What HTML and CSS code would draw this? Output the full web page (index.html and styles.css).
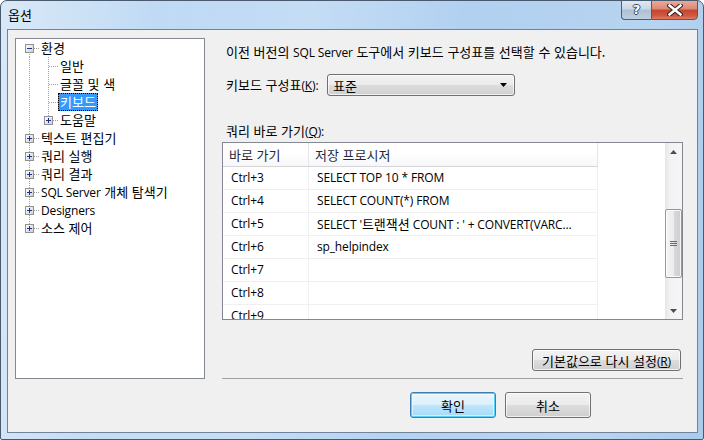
FILE: index.html
```html
<!DOCTYPE html>
<html lang="ko">
<head>
<meta charset="utf-8">
<title>옵션</title>
<link rel="stylesheet" href="styles.css">
</head>
<body>
<div class="window">
  <div class="titlebar">
    <span class="title">옵션</span>
    <div class="caption-btns">
      <div class="cbtn help"><span class="qmark">?</span></div>
      <div class="cbtn close">
        <svg width="16" height="12" viewBox="0 0 16 12"><path d="M2.5 1.5 L13.5 10.5 M13.5 1.5 L2.5 10.5" stroke="#3a2a28" stroke-width="4.6" stroke-linecap="square"/><path d="M2.5 1.5 L13.5 10.5 M13.5 1.5 L2.5 10.5" stroke="#fff" stroke-width="2.4" stroke-linecap="square"/></svg>
      </div>
    </div>
  </div>
  <div class="client">
    <div class="tree">
      <div class="trow">
        <span class="cell root first"><svg class="exp" width="9" height="9" viewBox="0 0 9 9"><defs><linearGradient id="g" x1="0" y1="0" x2="1" y2="1"><stop offset="0" stop-color="#fff"/><stop offset="1" stop-color="#cfcfcf"/></linearGradient></defs><rect x=".5" y=".5" width="8" height="8" fill="url(#g)" stroke="#919191"/><path d="M2 4.5 H7" stroke="#1e3287"/></svg></span>
        <span class="label">환경</span>
      </div>
      <div class="trow">
        <span class="cell root vonly"></span><span class="cell child mid"></span>
        <span class="label">일반</span>
      </div>
      <div class="trow">
        <span class="cell root vonly"></span><span class="cell child mid"></span>
        <span class="label">글꼴 및 색</span>
      </div>
      <div class="trow">
        <span class="cell root vonly"></span><span class="cell child mid"></span>
        <span class="label selected">키보드</span>
      </div>
      <div class="trow">
        <span class="cell root vonly"></span><span class="cell child last"><svg class="exp" width="9" height="9" viewBox="0 0 9 9"><rect x=".5" y=".5" width="8" height="8" fill="url(#g)" stroke="#919191"/><path d="M2 4.5 H7 M4.5 2 V7" stroke="#1e3287"/></svg></span>
        <span class="label">도움말</span>
      </div>
      <div class="trow">
        <span class="cell root mid"><svg class="exp" width="9" height="9" viewBox="0 0 9 9"><rect x=".5" y=".5" width="8" height="8" fill="url(#g)" stroke="#919191"/><path d="M2 4.5 H7 M4.5 2 V7" stroke="#1e3287"/></svg></span>
        <span class="label">텍스트 편집기</span>
      </div>
      <div class="trow">
        <span class="cell root mid"><svg class="exp" width="9" height="9" viewBox="0 0 9 9"><rect x=".5" y=".5" width="8" height="8" fill="url(#g)" stroke="#919191"/><path d="M2 4.5 H7 M4.5 2 V7" stroke="#1e3287"/></svg></span>
        <span class="label">쿼리 실행</span>
      </div>
      <div class="trow">
        <span class="cell root mid"><svg class="exp" width="9" height="9" viewBox="0 0 9 9"><rect x=".5" y=".5" width="8" height="8" fill="url(#g)" stroke="#919191"/><path d="M2 4.5 H7 M4.5 2 V7" stroke="#1e3287"/></svg></span>
        <span class="label">쿼리 결과</span>
      </div>
      <div class="trow">
        <span class="cell root mid"><svg class="exp" width="9" height="9" viewBox="0 0 9 9"><rect x=".5" y=".5" width="8" height="8" fill="url(#g)" stroke="#919191"/><path d="M2 4.5 H7 M4.5 2 V7" stroke="#1e3287"/></svg></span>
        <span class="label"><span class="l">SQL Server</span> 개체 탐색기</span>
      </div>
      <div class="trow">
        <span class="cell root mid"><svg class="exp" width="9" height="9" viewBox="0 0 9 9"><rect x=".5" y=".5" width="8" height="8" fill="url(#g)" stroke="#919191"/><path d="M2 4.5 H7 M4.5 2 V7" stroke="#1e3287"/></svg></span>
        <span class="label"><span class="l">Designers</span></span>
      </div>
      <div class="trow">
        <span class="cell root last"><svg class="exp" width="9" height="9" viewBox="0 0 9 9"><rect x=".5" y=".5" width="8" height="8" fill="url(#g)" stroke="#919191"/><path d="M2 4.5 H7 M4.5 2 V7" stroke="#1e3287"/></svg></span>
        <span class="label">소스 제어</span>
      </div>
    </div>

    <div class="main">
      <p class="desc">이전 버전의 <span class="l">SQL Server</span> 도구에서 키보드 구성표를 선택할 수 있습니다.</p>
      <div class="scheme-row">
        <span class="scheme-label">키보드 구성표<span class="l">(<u>K</u>):</span></span>
        <div class="combo">
          <span class="combo-text">표준</span>
          <svg width="7" height="4" viewBox="0 0 7 4"><path d="M0 0 H7 L3.5 4 Z" fill="#000"/></svg>
        </div>
      </div>
      <div class="qlabel">쿼리 바로 가기<span class="l">(<u>Q</u>):</span></div>
      <div class="listview">
        <div class="lv-body">
          <div class="lv-header">
            <div class="hcell c1">바로 가기</div>
            <div class="hcell c2">저장 프로시저</div>
          </div>
          <div class="lv-row"><div class="cell1">Ctrl+3</div><div class="cell2">SELECT TOP 10 * FROM</div></div>
          <div class="lv-row"><div class="cell1">Ctrl+4</div><div class="cell2">SELECT COUNT(*) FROM</div></div>
          <div class="lv-row"><div class="cell1">Ctrl+5</div><div class="cell2">SELECT '<span class="k">트랜잭션</span> COUNT : ' + CONVERT(VARC...</div></div>
          <div class="lv-row"><div class="cell1">Ctrl+6</div><div class="cell2">sp_helpindex</div></div>
          <div class="lv-row"><div class="cell1">Ctrl+7</div><div class="cell2"></div></div>
          <div class="lv-row"><div class="cell1">Ctrl+8</div><div class="cell2"></div></div>
          <div class="lv-row"><div class="cell1">Ctrl+9</div><div class="cell2"></div></div>
        </div>
        <div class="scrollbar">
          <div class="sb-btn"><svg width="7" height="4" viewBox="0 0 7 4"><path d="M0 4 H7 L3.5 0 Z" fill="#4d4d4d"/></svg></div>
          <div class="sb-gap-top"></div>
          <div class="sb-thumb"><svg width="7" height="6" viewBox="0 0 7 6"><path d="M0 .5 H7 M0 2.5 H7 M0 4.5 H7" stroke="#6b6b6b"/></svg></div>
          <div class="sb-gap"></div>
          <div class="sb-btn"><svg width="7" height="4" viewBox="0 0 7 4"><path d="M0 0 H7 L3.5 4 Z" fill="#4d4d4d"/></svg></div>
        </div>
      </div>
      <div class="reset-row">
        <button class="btn reset">기본값으로 다시 설정<span class="l">(<u>R</u>)</span></button>
      </div>
      <div class="sep"></div>
      <div class="dlg-btns">
        <button class="btn ok">확인</button>
        <button class="btn cancel">취소</button>
      </div>
    </div>
  </div>
</div>
</body>
</html>
```

FILE: styles.css
```css
* { box-sizing: border-box; }
html, body { margin: 0; padding: 0; background: #ffffff; }
body {
  font-family: "Noto Sans CJK KR", sans-serif;
  font-size: 13px;
  color: #000;
}
.l {
  font-family: "Open Sans", "Noto Sans CJK KR", sans-serif;
  font-size: 12px;
  letter-spacing: -0.15px;
}
.k {
  font-family: "Noto Sans CJK KR", sans-serif;
  font-size: 13px;
  letter-spacing: 0;
}
.window {
  width: 704px;
  height: 440px;
  border: 1px solid #4a5a6e;
  border-radius: 7px 7px 2px 2px;
  background:
    linear-gradient(100deg, rgba(255,255,255,0.25) 0%, rgba(255,255,255,0) 20%, rgba(255,255,255,0.18) 40%, rgba(255,255,255,0) 60%, rgba(255,255,255,0.15) 85%, rgba(255,255,255,0) 100%),
    linear-gradient(90deg, #cce1f5 0%, #bcd8f4 30%, #b3d2f1 60%, #a9cbec 100%);
  display: flex;
  flex-direction: column;
  overflow: hidden;
}
.titlebar {
  height: 28px;
  display: flex;
  align-items: flex-start;
  justify-content: space-between;
  flex: none;
}
.title {
  font-size: 13px;
  line-height: 16px;
  margin: 6px 0 0 7px;
  color: #000;
}
.caption-btns {
  display: flex;
  margin: -1px 5px 0 0;
}
.cbtn {
  height: 20px;
  border: 1px solid #4d5d73;
  display: flex;
  align-items: center;
  justify-content: center;
}
.help {
  width: 30px;
  border-right: none;
  border-radius: 0 0 0 4px;
  background: linear-gradient(180deg, #dfe9f4 0%, #c8d6e6 45%, #aebfd2 50%, #bfd0e2 100%);
}
.qmark {
  font-family: "DejaVu Sans", sans-serif;
  font-weight: bold;
  font-size: 13px;
  line-height: 14px;
  color: #fff;
  text-shadow: 1px 0 #3a4656, -1px 0 #3a4656, 0 1px #3a4656, 0 -1px #3a4656;
}
.close {
  width: 47px;
  border-radius: 0 0 4px 0;
  background: linear-gradient(180deg, #e9a99a 0%, #dc8874 45%, #c4452e 50%, #d0563f 80%, #e07b62 100%);
}
.client {
  flex: 1;
  margin: 0 5px 6px 6px;
  border: 1px solid #71839a;
  background: #f0f0f0;
  display: flex;
  padding: 8px 0 0 7px;
}

/* tree */
.tree {
  width: 190px;
  height: 341px;
  border: 1px solid #828790;
  background: #fff;
  flex: none;
}
.trow {
  height: 18px;
  display: flex;
  align-items: center;
}
.cell {
  height: 18px;
  flex: none;
  display: flex;
  align-items: center;
  background-repeat: no-repeat;
}
.cell.root { width: 23px; }
.cell.child { width: 19px; }
.cell.root .exp { margin-left: 9px; }
.cell.child .exp { margin-left: 5px; }
.exp { display: block; }

.cell.root.first {
  background-image:
    repeating-linear-gradient(to bottom, #a0a0a0 0 1px, transparent 1px 2px),
    repeating-linear-gradient(to right, #a0a0a0 0 1px, transparent 1px 2px);
  background-size: 1px 9px, 5px 1px;
  background-position: 13px 9px, 18px 9px;
}
.cell.root.mid {
  background-image:
    repeating-linear-gradient(to bottom, #a0a0a0 0 1px, transparent 1px 2px),
    repeating-linear-gradient(to right, #a0a0a0 0 1px, transparent 1px 2px);
  background-size: 1px 18px, 5px 1px;
  background-position: 13px 0, 18px 9px;
}
.cell.root.last {
  background-image:
    repeating-linear-gradient(to bottom, #a0a0a0 0 1px, transparent 1px 2px),
    repeating-linear-gradient(to right, #a0a0a0 0 1px, transparent 1px 2px);
  background-size: 1px 9px, 5px 1px;
  background-position: 13px 0, 18px 9px;
}
.cell.root.vonly {
  background-image: repeating-linear-gradient(to bottom, #a0a0a0 0 1px, transparent 1px 2px);
  background-size: 1px 18px;
  background-position: 13px 0;
}
.cell.child.mid {
  background-image:
    repeating-linear-gradient(to bottom, #a0a0a0 0 1px, transparent 1px 2px),
    repeating-linear-gradient(to right, #a0a0a0 0 1px, transparent 1px 2px);
  background-size: 1px 18px, 9px 1px;
  background-position: 9px 0, 10px 9px;
}
.cell.child.last {
  background-image:
    repeating-linear-gradient(to bottom, #a0a0a0 0 1px, transparent 1px 2px),
    repeating-linear-gradient(to right, #a0a0a0 0 1px, transparent 1px 2px);
  background-size: 1px 9px, 5px 1px;
  background-position: 9px 0, 14px 9px;
}
.label {
  padding: 0 2px;
  height: 18px;
  line-height: 18px;
  white-space: nowrap;
}
.label.selected {
  background: #3399ff;
  color: #fff;
  outline: 1px dotted #000;
  outline-offset: -1px;
}

/* main */
.main {
  width: 461px;
  margin-left: 17px;
  display: flex;
  flex-direction: column;
}
.desc {
  margin: 6px 0 0 4px;
  line-height: 16px;
  height: 16px;
  white-space: nowrap;
}
.scheme-row {
  margin: 14px 0 0 4px;
  display: flex;
  align-items: center;
  height: 22px;
}
.scheme-label { width: 101px; flex: none; line-height: 16px; }
.combo {
  width: 188px;
  height: 22px;
  border: 1px solid #707070;
  border-radius: 3px;
  background: linear-gradient(180deg, #f2f2f2 0%, #ebebeb 50%, #dddddd 50%, #cfcfcf 100%);
  box-shadow: inset 0 0 0 1px rgba(255,255,255,0.7);
  display: flex;
  align-items: center;
  justify-content: space-between;
  padding: 0 7px 0 5px;
}
.qlabel {
  margin: 27px 0 0 4px;
  line-height: 16px;
  height: 16px;
}
.listview {
  margin-top: 3px;
  height: 178px;
  border: 1px solid #828790;
  background: #fff;
  display: flex;
}
.lv-body {
  flex: 1;
  overflow: hidden;
}
.lv-header {
  display: flex;
  height: 24px;
  width: 375px;
  border-bottom: 1px solid #d5d5d5;
  background: linear-gradient(180deg, #ffffff 0%, #ffffff 40%, #f7f8fa 100%);
}
.hcell {
  line-height: 23px;
  padding-left: 6px;
  color: #1e2a3a;
}
.hcell.c1 { width: 86px; border-right: 1px solid #e3e5e8; }
.hcell.c2 { width: 289px; border-right: 1px solid #e3e5e8; }
.lv-row {
  display: flex;
  height: 23px;
  width: 375px;
  border-bottom: 1px solid #f0f0f0;
}
.cell1, .cell2 {
  font-family: "Open Sans", "Noto Sans CJK KR", sans-serif;
  font-size: 12px;
  letter-spacing: -0.15px;
  line-height: 22px;
  height: 22px;
  padding-left: 8px;
  white-space: nowrap;
  overflow: hidden;
}
.cell1 { width: 86px; border-right: 1px solid #f0f0f0; }
.cell2 { width: 289px; border-right: 1px solid #f0f0f0; }
.scrollbar {
  width: 17px;
  flex: none;
  display: flex;
  flex-direction: column;
  background: linear-gradient(90deg, #e6e6e6 0%, #f3f3f3 30%, #f5f5f5 100%);
}
.sb-btn {
  height: 17px;
  display: flex;
  align-items: center;
  justify-content: center;
  flex: none;
}
.sb-gap-top { height: 49px; flex: none; }
.sb-thumb {
  height: 69px;
  flex: none;
  border: 1px solid #979797;
  border-radius: 2px;
  background: linear-gradient(90deg, #f4f4f4 0%, #ececec 50%, #d9d9d9 51%, #cdcdcd 100%);
  box-shadow: inset 0 0 0 1px rgba(255,255,255,0.8);
  display: flex;
  align-items: center;
  justify-content: center;
}
.sb-gap { flex: 1; }

.btn {
  font-family: "Noto Sans CJK KR", sans-serif;
  font-size: 13px;
  color: #000;
  border: 1px solid #707070;
  border-radius: 3px;
  background: linear-gradient(180deg, #f2f2f2 0%, #ebebeb 50%, #dddddd 50%, #cfcfcf 100%);
  box-shadow: inset 0 0 0 1px rgba(255,255,255,0.7);
  padding: 0;
  margin: 0;
}
.reset-row {
  margin-top: 29px;
  display: flex;
  justify-content: flex-end;
  padding-right: 2px;
}
.reset { width: 149px; height: 22px; }
.sep {
  margin-top: 7px;
  height: 1px;
  background: #a0a0a0;
}
.dlg-btns {
  margin-top: 13px;
  display: flex;
  padding-left: 188px;
  gap: 9px;
}
.ok, .cancel { width: 86px; height: 26px; }
.ok {
  border-color: #3c7fb1;
  background: linear-gradient(180deg, #eaf6fd 0%, #d9f0fc 50%, #bee6fd 50%, #a7d9f5 100%);
  box-shadow: inset 0 0 0 1px #5ad0f8, inset 0 0 0 2px rgba(255,255,255,0.5);
}
u { text-decoration: underline; text-underline-offset: 1px; }
```
